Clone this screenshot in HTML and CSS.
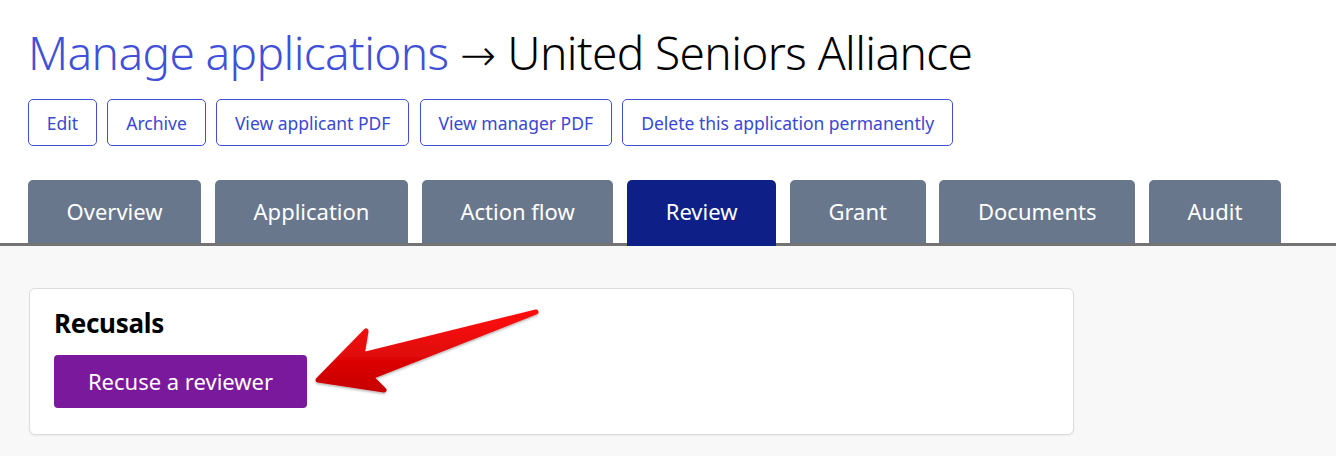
FILE: index.html
```html
<!DOCTYPE html>
<html lang="en">
<head>
<meta charset="utf-8">
<title>Manage applications</title>
<link rel="stylesheet" href="styles.css">
</head>
<body>
<header class="page-head">
  <h1 class="title"><a class="crumb" href="#">Manage applications</a> <span class="sep">→</span> United Seniors Alliance</h1>
  <div class="actions">
    <a class="btn-outline" href="#">Edit</a>
    <a class="btn-outline" href="#">Archive</a>
    <a class="btn-outline" href="#">View applicant PDF</a>
    <a class="btn-outline" href="#">View manager PDF</a>
    <a class="btn-outline" href="#">Delete this application permanently</a>
  </div>
</header>
<nav class="tabs">
  <a class="tab" href="#">Overview</a>
  <a class="tab" href="#">Application</a>
  <a class="tab" href="#">Action flow</a>
  <a class="tab active" href="#">Review</a>
  <a class="tab" href="#">Grant</a>
  <a class="tab" href="#">Documents</a>
  <a class="tab" href="#">Audit</a>
</nav>
<main class="content">
  <section class="card">
    <h2 class="card-title">Recusals</h2>
    <button class="btn-primary" type="button">Recuse a reviewer</button>
  </section>
  <svg class="callout" width="260" height="110" viewBox="0 0 260 110" aria-hidden="true">
    <defs>
      <linearGradient id="rg" x1="0" y1="0" x2="0" y2="1">
        <stop offset="0" stop-color="#ff1010"/>
        <stop offset="1" stop-color="#c80000"/>
      </linearGradient>
      <filter id="sh" x="-10%" y="-10%" width="120%" height="130%">
        <feDropShadow dx="0" dy="1.5" stdDeviation="1.2" flood-color="#000" flood-opacity="0.3"/>
      </filter>
    </defs>
    <path d="M28 80 L76 31 L72 55 L246 12 L81 77 L94 90 Z" fill="url(#rg)" stroke="url(#rg)" stroke-width="5" stroke-linejoin="round" filter="url(#sh)"/>
  </svg>
</main>
</body>
</html>
```
FILE: styles.css
```css
* { box-sizing: border-box; }
html, body { margin: 0; padding: 0; background: #ffffff; }
body {
  font-family: "Noto Sans", "Open Sans", "Liberation Sans", sans-serif;
  color: #000;
  height: 456px;
  overflow: hidden;
}
.page-head { padding: 20px 28px 0 28px; }
.title {
  margin: 0;
  font-size: 46px;
  font-weight: 300;
  line-height: 64px;
  color: #000;
  letter-spacing: -0.6px;
}
.crumb { color: #4150d8; text-decoration: none; }
.sep {
  font-family: "DejaVu Sans", sans-serif;
  font-weight: 300;
  font-size: 43px;
  line-height: 1;
  letter-spacing: 0;
}
.actions {
  display: flex;
  gap: 10.5px;
  margin-top: 15px;
}
.btn-outline {
  display: inline-flex;
  align-items: center;
  height: 47px;
  padding: 0 17.8px;
  border: 1px solid #4150d8;
  border-radius: 5px;
  color: #3a48d2;
  font-size: 17.5px;
  text-decoration: none;
  background: #fff;
}
.tabs {
  display: flex;
  align-items: flex-end;
  gap: 13.8px;
  margin-top: 34px;
  padding-left: 28px;
  border-bottom: 3px solid #737373;
}
.tab {
  display: flex;
  align-items: center;
  justify-content: center;
  height: 63px;
  padding: 0 38.6px 2px;
  background: #69778c;
  color: #fff;
  font-size: 22px;
  text-decoration: none;
  border-radius: 5px 5px 0 0;
}
.tab.active {
  background: #0e2087;
  height: 66px;
  margin-bottom: -3px;
  padding-bottom: 5px;
}
.content {
  position: relative;
  background: #f8f8f8;
  padding: 42px 262px 0 29px;
  height: 210px;
}
.card {
  background: #fff;
  border: 1px solid #dcdcdc;
  border-radius: 6px;
  box-shadow: 0 1px 2px rgba(0,0,0,0.06);
  padding: 16px 24px 24px 24px;
  height: 147px;
}
.card-title {
  margin: 0 0 14px 0;
  font-size: 26px;
  font-weight: 700;
  line-height: 36px;
  letter-spacing: -0.3px;
}
.btn-primary {
  font-family: inherit;
  display: inline-flex;
  align-items: center;
  justify-content: center;
  height: 53px;
  width: 253px;
  border: 0;
  border-radius: 4px;
  background: #7b199c;
  color: #fff;
  font-size: 22px;
  padding: 0 0 2px;
}
.callout {
  position: absolute;
  left: 290px;
  top: 54px;
  overflow: visible;
}
```
